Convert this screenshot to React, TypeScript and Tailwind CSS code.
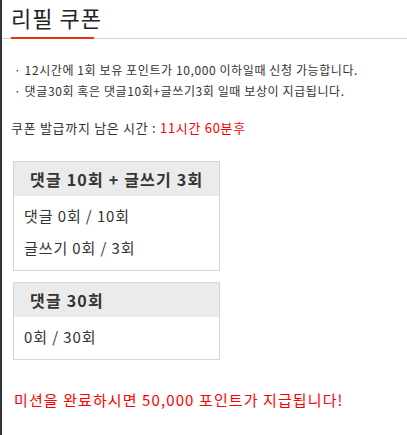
import React from "react";

const font = { fontFamily: '"Noto Sans CJK KR", "Noto Sans", sans-serif' };

function Box({ title, lines }: { title: string; lines: string[] }) {
  return (
    <div className="w-[207px] border border-[#d6d6d6] bg-white">
      <div className="h-[34px] bg-[#ebebeb] pl-[16px] flex items-center text-[16px] font-bold text-[#333] tracking-[1.2px]">
        {title}
      </div>
      <div className="pl-[10px] pt-[4px] pb-[6px] text-[15px] text-[#333] tracking-[0.9px]">
        {lines.map((l) => (
          <div key={l} className="h-[32px] flex items-center">
            {l}
          </div>
        ))}
      </div>
    </div>
  );
}

export default function App() {
  return (
    <div className="w-[407px] h-[435px] bg-white border-l-2 border-[#333] overflow-hidden" style={font}>
      <div className="relative h-[39px] pl-[9px]">
        <div className="pt-[2px] text-[22px] leading-[31px] text-[#222] tracking-[1px]">리필 쿠폰</div>
        <div className="absolute left-0 right-0 bottom-0 h-px bg-[#cfcfcf]" />
        <div className="absolute left-[9px] w-[83px] bottom-0 h-[2px] bg-[#e8320e]" />
      </div>
      <div className="pl-[12px] pt-[20px] text-[12px] text-[#333] leading-[21px] tracking-[0.6px]">
        <div>· 12시간에 1회 보유 포인트가 10,000 이하일때 신청 가능합니다.</div>
        <div>· 댓글30회 혹은 댓글10회+글쓰기3회 일때 보상이 지급됩니다.</div>
      </div>
      <div className="pl-[9px] pt-[17px] text-[13px] text-[#333] leading-[20px] tracking-[0.7px]">
        쿠폰 발급까지 남은 시간 : <span className="text-[#ff0000]">11시간 60분후</span>
      </div>
      <div className="pl-[11px] pt-[23px] flex flex-col gap-[11px]">
        <Box title="댓글 10회 + 글쓰기 3회" lines={["댓글 0회 / 10회", "글쓰기 0회 / 3회"]} />
        <Box title="댓글 30회" lines={["0회 / 30회"]} />
      </div>
      <div className="pl-[12px] pt-[30px] text-[15px] text-[#ff0000] leading-[20px] tracking-[1.1px]">
        미션을 완료하시면 50,000 포인트가 지급됩니다!
      </div>
    </div>
  );
}
